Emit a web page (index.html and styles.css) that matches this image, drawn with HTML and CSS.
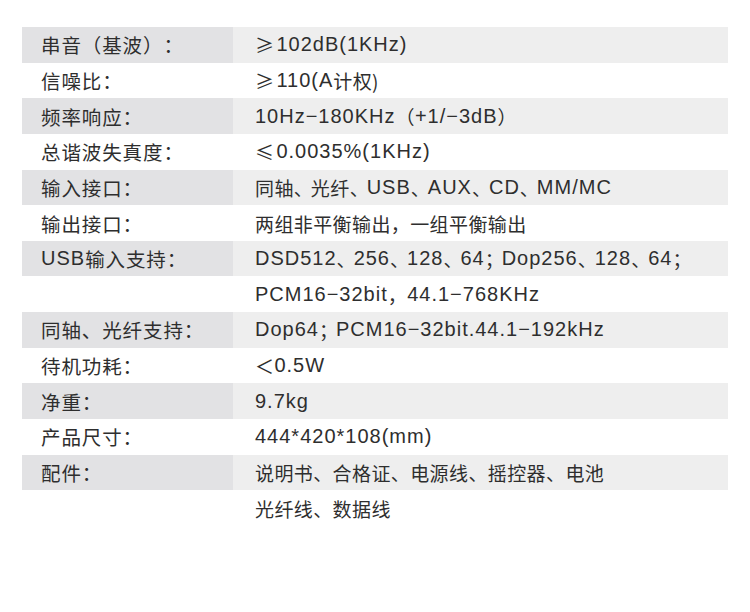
FILE: index.html
```html
<!DOCTYPE html>
<html lang="zh-CN">
<head>
<meta charset="utf-8">
<link rel="stylesheet" href="styles.css">
</head>
<body>
<div class="spec">
  <div class="row shade"><div class="label">串音（基波）：</div><div class="value"><span class="sym">≥</span><span class="en">102dB(1KHz)</span></div></div>
  <div class="row"><div class="label">信噪比：</div><div class="value"><span class="sym">≥</span><span class="en">110(A</span>计权)</div></div>
  <div class="row shade"><div class="label">频率响应：</div><div class="value"><span class="en">10Hz−180KHz</span>（<span class="en">+1/−3dB</span>）</div></div>
  <div class="row"><div class="label">总谐波失真度：</div><div class="value"><span class="sym">≤</span><span class="en">0.0035%(1KHz)</span></div></div>
  <div class="row shade"><div class="label">输入接口：</div><div class="value">同轴<span class="pu">、</span>光纤<span class="pu">、</span><span class="en">USB</span><span class="pu">、</span><span class="en">AUX</span><span class="pu">、</span><span class="en">CD</span><span class="pu">、</span><span class="en">MM/MC</span></div></div>
  <div class="row"><div class="label">输出接口：</div><div class="value">两组非平衡输出，一组平衡输出</div></div>
  <div class="row shade"><div class="label"><span class="en">USB</span>输入支持：</div><div class="value"><span class="en">DSD512</span><span class="pu">、</span><span class="en">256</span><span class="pu">、</span><span class="en">128</span><span class="pu">、</span><span class="en">64</span><span class="pu">；</span><span class="en">Dop256</span><span class="pu">、</span><span class="en">128</span><span class="pu">、</span><span class="en">64</span><span class="pu">；</span></div></div>
  <div class="row"><div class="label"></div><div class="value"><span class="en">PCM16−32bit</span>，<span class="en">44.1−768KHz</span></div></div>
  <div class="row shade"><div class="label">同轴、光纤支持：</div><div class="value"><span class="en">Dop64</span><span class="pu">；</span><span class="en">PCM16−32bit.44.1−192kHz</span></div></div>
  <div class="row"><div class="label">待机功耗：</div><div class="value">＜<span class="en">0.5W</span></div></div>
  <div class="row shade"><div class="label">净重：</div><div class="value"><span class="en">9.7kg</span></div></div>
  <div class="row"><div class="label">产品尺寸：</div><div class="value"><span class="en">444*420*108(mm)</span></div></div>
  <div class="row shade"><div class="label">配件：</div><div class="value">说明书、合格证、电源线、摇控器、电池</div></div>
  <div class="row"><div class="label"></div><div class="value">光纤线、数据线</div></div>
</div>
</body>
</html>
```
FILE: styles.css
```css
html, body {
  margin: 0;
  padding: 0;
  background: #ffffff;
}
body {
  width: 750px;
  height: 612px;
  overflow: hidden;
  font-family: "Noto Sans CJK SC", "Liberation Sans", sans-serif;
  color: #2e2e2e;
  text-spacing-trim: space-all;
}
.spec {
  margin: 27px 22px 0 22px;
  width: 706px;
  display: flex;
  flex-direction: column;
}
.row {
  display: grid;
  grid-template-columns: 211px 495px;
  height: 35.65px;
}
.row > div {
  display: flex;
  align-items: center;
  white-space: nowrap;
}
.label {
  padding-left: 19px;
  font-size: 19.5px;
  letter-spacing: 0.9px;
}
.value {
  padding-left: 22px;
  font-size: 19px;
  letter-spacing: 0.4px;
}
.en {
  font-family: "Liberation Sans", "Noto Sans CJK SC", sans-serif;
  font-size: 20px;
  letter-spacing: 1px;
}
.pu {
  letter-spacing: -2px;
}
.sym {
  font-family: "Noto Sans CJK SC", sans-serif;
  font-size: 19px;
  margin-right: 2px;
}
.shade .label {
  background: #e2e2e4;
}
.shade .value {
  background: #eeeeee;
}
```
